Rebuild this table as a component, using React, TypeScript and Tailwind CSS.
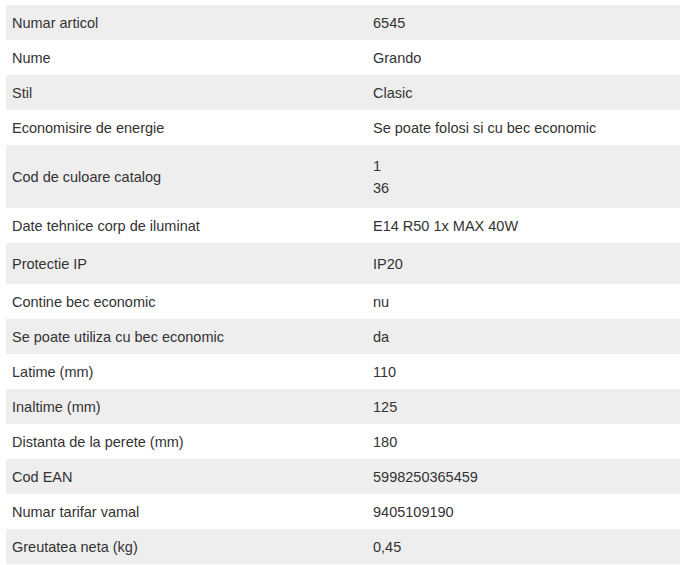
const rows: { label: string; value: string[]; h: string }[] = [
  { label: "Numar articol", value: ["6545"], h: "h-[35px]" },
  { label: "Nume", value: ["Grando"], h: "h-[35px]" },
  { label: "Stil", value: ["Clasic"], h: "h-[35px]" },
  { label: "Economisire de energie", value: ["Se poate folosi si cu bec economic"], h: "h-[35px]" },
  { label: "Cod de culoare catalog", value: ["1", "36"], h: "h-[63px]" },
  { label: "Date tehnice corp de iluminat", value: ["E14 R50 1x MAX 40W"], h: "h-[35px]" },
  { label: "Protectie IP", value: ["IP20"], h: "h-[41px]" },
  { label: "Contine bec economic", value: ["nu"], h: "h-[35px]" },
  { label: "Se poate utiliza cu bec economic", value: ["da"], h: "h-[35px]" },
  { label: "Latime (mm)", value: ["110"], h: "h-[35px]" },
  { label: "Inaltime (mm)", value: ["125"], h: "h-[35px]" },
  { label: "Distanta de la perete (mm)", value: ["180"], h: "h-[35px]" },
  { label: "Cod EAN", value: ["5998250365459"], h: "h-[35px]" },
  { label: "Numar tarifar vamal", value: ["9405109190"], h: "h-[35px]" },
  { label: "Greutatea neta (kg)", value: ["0,45"], h: "h-[35px]" },
];

export default function App() {
  return (
    <div className="w-[680px] h-[565px] overflow-hidden bg-white pt-[5px] pl-[6px] font-['Liberation_Sans',Arial,sans-serif] text-[14.5px] leading-[22px] text-[#333333]">
      <div className="flex flex-col">
        {rows.map((r, i) => (
          <div
            key={r.label}
            className={`grid grid-cols-[361px_1fr] items-center ${r.h} ${i % 2 === 0 ? "bg-[#eeeeee]" : "bg-white"}`}
          >
            <div className="pl-[6px]">{r.label}</div>
            <div className="pl-[6px]">
              {r.value.map((v) => (
                <div key={v}>{v}</div>
              ))}
            </div>
          </div>
        ))}
      </div>
    </div>
  );
}
